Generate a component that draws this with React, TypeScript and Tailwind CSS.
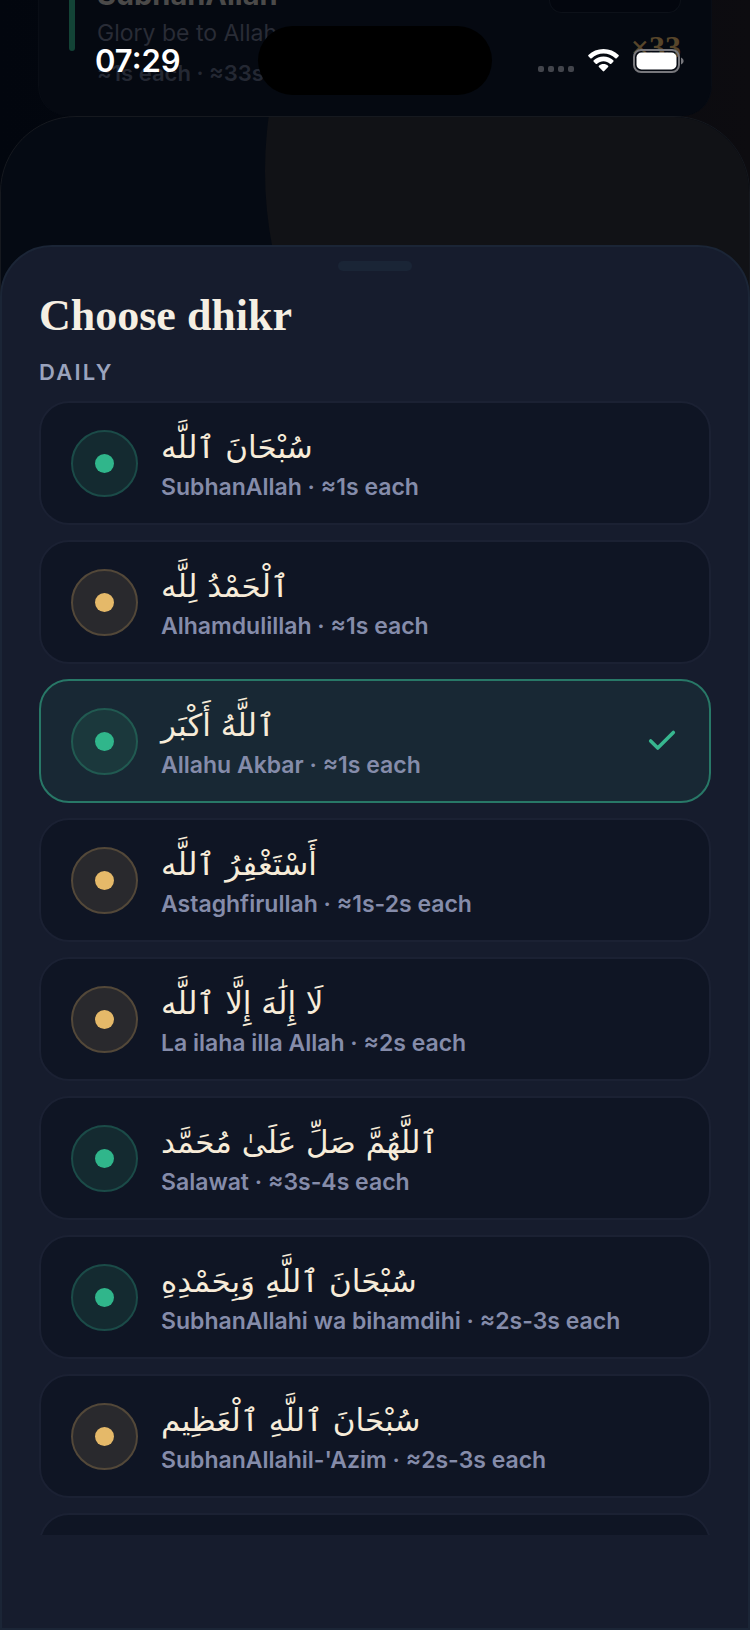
import { useState } from 'react';
import { Check } from 'lucide-react';
import { clsx } from 'clsx';

type Tone = 'green' | 'gold';

interface Dhikr {
  id: string;
  arabic: string;
  name: string;
  pace: string;
  tone: Tone;
}

const DAILY: Dhikr[] = [
  { id: 'subhanallah', arabic: 'سُبْحَانَ ٱللَّه', name: 'SubhanAllah', pace: '≈1s each', tone: 'green' },
  { id: 'alhamdulillah', arabic: 'ٱلْحَمْدُ لِلَّه', name: 'Alhamdulillah', pace: '≈1s each', tone: 'gold' },
  { id: 'allahu-akbar', arabic: 'ٱللَّهُ أَكْبَر', name: 'Allahu Akbar', pace: '≈1s each', tone: 'green' },
  { id: 'astaghfirullah', arabic: 'أَسْتَغْفِرُ ٱللَّه', name: 'Astaghfirullah', pace: '≈1s-2s each', tone: 'gold' },
  { id: 'la-ilaha', arabic: 'لَا إِلَٰهَ إِلَّا ٱللَّه', name: 'La ilaha illa Allah', pace: '≈2s each', tone: 'gold' },
  { id: 'salawat', arabic: 'ٱللَّهُمَّ صَلِّ عَلَىٰ مُحَمَّد', name: 'Salawat', pace: '≈3s-4s each', tone: 'green' },
  { id: 'bihamdihi', arabic: 'سُبْحَانَ ٱللَّهِ وَبِحَمْدِهِ', name: 'SubhanAllahi wa bihamdihi', pace: '≈2s-3s each', tone: 'green' },
  { id: 'azim', arabic: 'سُبْحَانَ ٱللَّهِ ٱلْعَظِيم', name: "SubhanAllahil-'Azim", pace: '≈2s-3s each', tone: 'gold' },
];

export default function App() {
  const [selected, setSelected] = useState('allahu-akbar');

  return (
    <div className="relative flex h-screen flex-col overflow-hidden bg-[#040810] font-['Inter','DejaVu_Sans',sans-serif]">
      <Backdrop />
      <StatusBar />

      <main className="relative mt-[245px] flex min-h-0 flex-1 flex-col rounded-t-[52px] border-2 border-[#1b2536] bg-[#161c2d] px-[37px] pb-[93px]">
        <div className="mx-auto mt-[14px] h-[10px] w-[74px] shrink-0 rounded-full bg-[#1a2536]" />
        <h1 className="mt-[21px] font-['Liberation_Serif',serif] text-[44px] leading-[48px] font-bold text-[#f5efe3]">
          Choose dhikr
        </h1>
        <h2 className="mt-4 text-[22px] leading-8 font-semibold tracking-widest text-[#9aa3bd]">DAILY</h2>

        <ul className="mt-[13px] flex min-h-0 flex-1 flex-col gap-[15px] overflow-hidden">
          {DAILY.map((d) => (
            <li key={d.id} className="shrink-0">
              <DhikrRow dhikr={d} active={d.id === selected} onSelect={() => setSelected(d.id)} />
            </li>
          ))}
          <li aria-hidden="true" className="h-[124px] shrink-0 rounded-[30px] border-2 border-[#1b2133] bg-[#0f1524]" />
        </ul>
      </main>
    </div>
  );
}

function DhikrRow({ dhikr, active, onSelect }: { dhikr: Dhikr; active: boolean; onSelect: () => void }) {
  return (
    <button
      type="button"
      aria-pressed={active}
      onClick={onSelect}
      className={clsx(
        'flex h-[124px] w-full items-center gap-[23px] rounded-[30px] border-2 px-[30px] text-left',
        active ? 'border-[#287867] bg-[#182834]' : 'border-[#1b2133] bg-[#0f1524]',
      )}
    >
      <span
        className={clsx(
          'flex size-[67px] shrink-0 items-center justify-center rounded-full border-2',
          dhikr.tone === 'gold' && 'border-[#534839] bg-[#29292d]',
          dhikr.tone === 'green' && (active ? 'border-[#215a51] bg-[#1b383c]' : 'border-[#1b4b48] bg-[#142a30]'),
        )}
      >
        <span className={clsx('size-[19px] rounded-full', dhikr.tone === 'gold' ? 'bg-[#e5b969]' : 'bg-[#30b68b]')} />
      </span>
      <span className="flex min-w-0 flex-1 flex-col items-start pt-[3px]">
        <span dir="rtl" lang="ar" className="font-['DejaVu_Sans',sans-serif] text-[31px] leading-[44px] text-[#f7ecd9]">
          {dhikr.arabic}
        </span>
        <span className="text-[23px] leading-9 font-semibold text-[#858caa]">
          {dhikr.name} · {dhikr.pace}
        </span>
      </span>
      {active && <Check className="size-[34px] shrink-0 text-[#37b78f]" strokeWidth={2.5} />}
    </button>
  );
}

function StatusBar() {
  return (
    <header className="absolute inset-x-0 top-[26px] flex h-[69px] items-center justify-between pr-[66px] pl-[95px] text-white">
      <time className="text-[31px] leading-10 font-semibold">07:29</time>
      <div className="absolute left-1/2 h-[69px] w-[234px] -translate-x-1/2 rounded-full bg-black" />
      <div className="flex items-center">
        <div className="mr-[14px] flex gap-1 pt-4">
          {[0, 1, 2, 3].map((i) => (
            <span key={i} className="size-[6px] rounded-[2px] bg-[#43454c]" />
          ))}
        </div>
        <svg className="mr-[14px] h-[23px] w-[31px]" viewBox="0 0 31 23" fill="currentColor" aria-label="Wi-Fi">
          <path d="M15.5 0C9.600 0 4.300 2.200 .4 5.900c-.4.400-.4 1 0 1.400l1.900 1.900c.4.400 1 .4 1.400 0 3.100-2.900 7.300-4.600 11.800-4.600s8.700 1.700 11.800 4.600c.4.400 1 .4 1.400 0l1.900-1.900c.4-.4.4-1 0-1.400C26.700 2.200 21.400 0 15.500 0Z" />
          <path d="M15.500 7.500c-3.800 0-7.200 1.500-9.800 3.800-.4.400-.4 1 0 1.400l2 2c.4.400 1 .4 1.400 0 1.700-1.500 3.900-2.500 6.400-2.500s4.700 1 6.400 2.500c.4.400 1 .4 1.400 0l2-2c.4-.4.4-1 0-1.400-2.600-2.300-6-3.800-9.800-3.800Z" />
          <path d="M15.500 15c-1.800 0-3.400.7-4.600 1.700-.4.400-.4 1 0 1.400l3.900 4c.4.400 1 .4 1.400 0l3.900-4c.4-.4.4-1 0-1.400-1.200-1-2.800-1.700-4.600-1.700Z" />
        </svg>
        <svg className="h-[24px] w-[51px]" viewBox="0 0 51 24" fill="none" aria-label="Battery full">
          <rect x="1" y="1" width="45" height="22" rx="7" stroke="#77777c" strokeWidth="2" />
          <rect x="3.500" y="3.500" width="40" height="17" rx="5" fill="white" />
          <path d="M48 8.500c1.700.7 2.600 2 2.600 3.500s-.9 2.800-2.600 3.500Z" fill="#77777c" />
        </svg>
      </div>
    </header>
  );
}

// The dimmed screen that stays visible behind the sheet.
function Backdrop() {
  return (
    <div aria-hidden="true" className="absolute inset-0 overflow-hidden bg-linear-to-r from-[#02060e] to-[#0d0c10]">
      <div className="absolute inset-x-0 top-[116px] h-[400px] overflow-hidden rounded-t-[76px] border border-[#16191f] bg-[#050a13]">
        <div className="absolute -top-[346px] left-[264px] size-[800px] rounded-full bg-[#111216]" />
      </div>
      <div className="relative mx-[38px] flex h-[116px] items-start justify-between overflow-hidden rounded-b-[30px] border-x border-[#090d15] bg-[#050911] pr-[30px] pl-[30px]">
        <div className="flex">
          <div className="h-[51px] w-[6px] rounded-b-full bg-[#134336]" />
          <div className="-mt-6 ml-[22px] flex flex-col">
            <p className="text-[29px] leading-[38px] font-bold text-[#4b4a49]">SubhanAllah</p>
            <p className="mt-[3px] text-[23px] leading-8 text-[#292c36]">Glory be to Allah</p>
            <p className="mt-2 text-[22px] leading-8 font-semibold text-[#242833]">≈1s each · ≈33s</p>
          </div>
        </div>
        <div className="flex flex-col items-end">
          <div className="h-[13px] w-[132px] rounded-b-[26px] border border-t-0 border-[#0d1119] bg-[#03060e]" />
          <p className="mt-[18px] font-['Liberation_Serif',serif] text-[32px] leading-8 font-bold text-[#57452a]">×33</p>
        </div>
      </div>
    </div>
  );
}
